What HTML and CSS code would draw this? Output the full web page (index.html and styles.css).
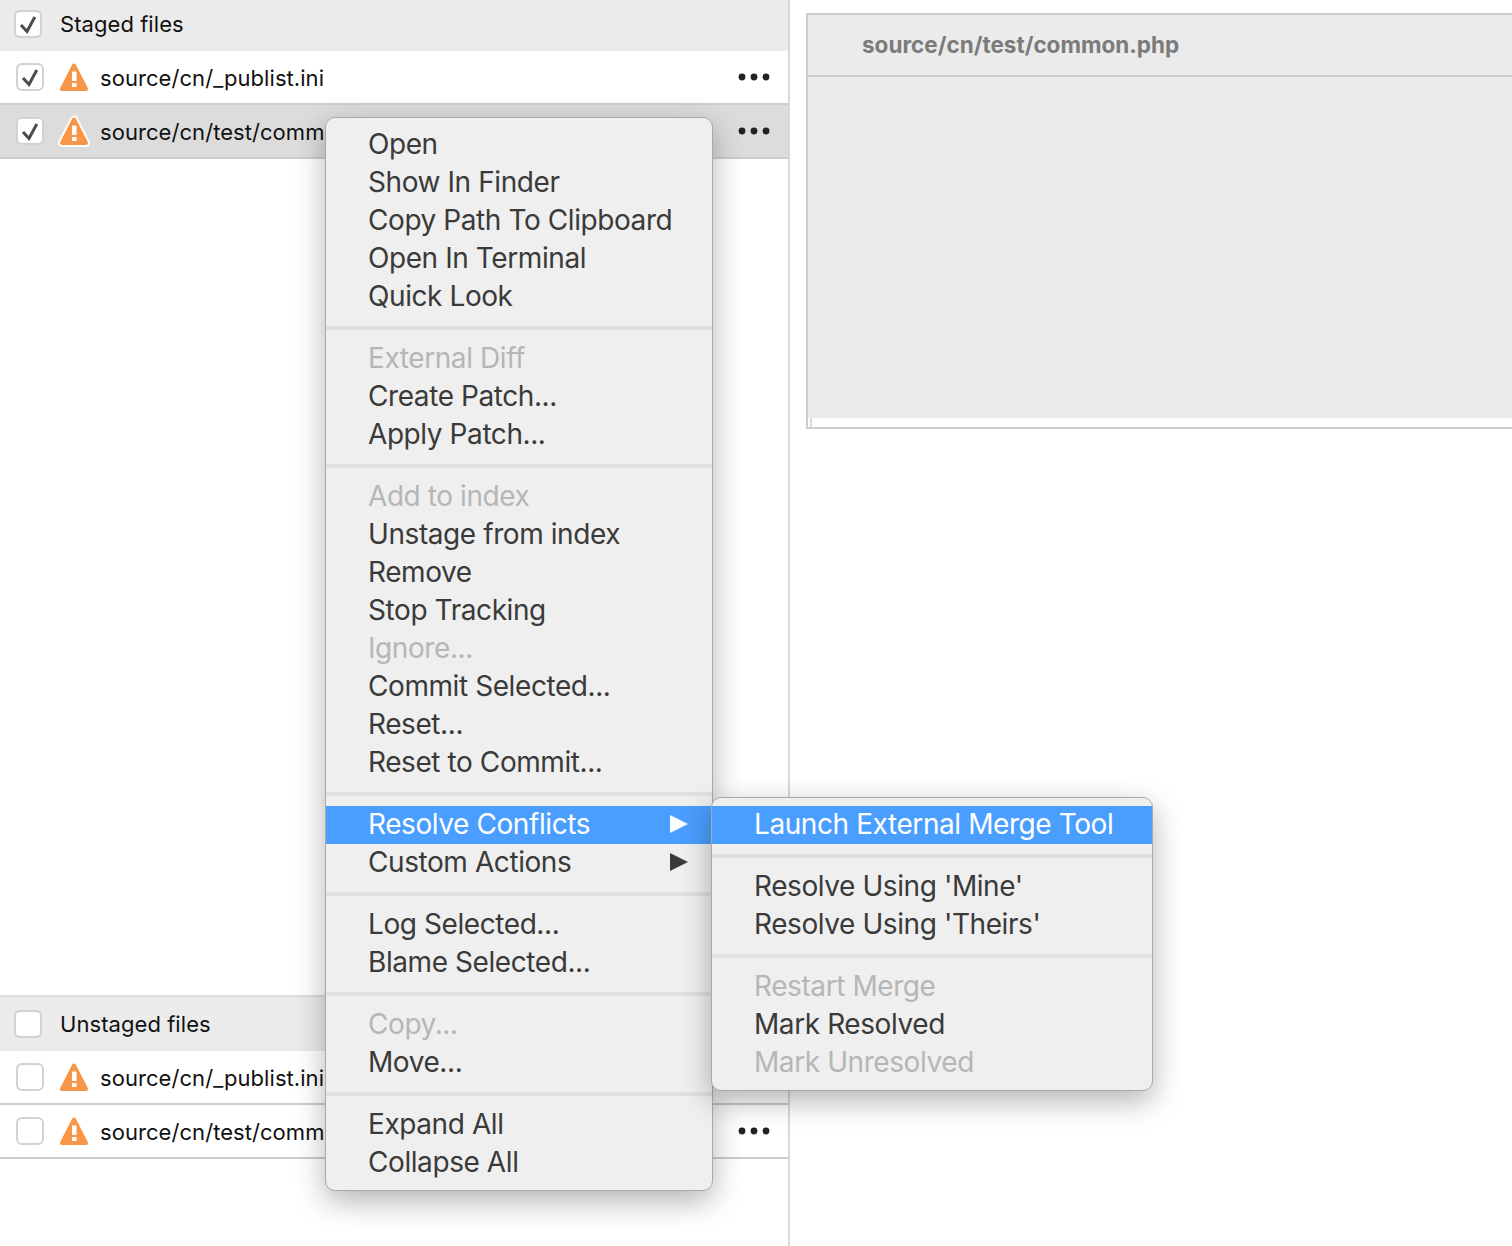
FILE: index.html
```html
<!DOCTYPE html>
<html lang="en">
<head>
  <meta charset="UTF-8">
  <title>Resolve Conflicts</title>
  <link rel="stylesheet" href="styles.css">
</head>
<body>

  <svg class="defs">
    <symbol id="tick" viewBox="0 0 28 28">
      <polyline points="7,15 13,21.5 20.8,7" fill="none" stroke="#4c4c4c" stroke-width="3"/>
    </symbol>
    <symbol id="warn" viewBox="0 0 28 28">
      <polygon points="14,2.5 2,26 26,26" fill="#f79646" stroke="#f79646" stroke-width="4" stroke-linejoin="round"/>
      <rect x="12" y="8.5" width="4.5" height="9.5" fill="#fff"/>
      <rect x="12" y="20" width="4.5" height="4" fill="#fff"/>
    </symbol>
    <symbol id="warnOutlined" viewBox="-3 -3 34 34">
      <polygon points="14,2.5 2,26 26,26" fill="#fff" stroke="#fff" stroke-width="8" stroke-linejoin="round"/>
      <polygon points="14,2.5 2,26 26,26" fill="#f79646" stroke="#f79646" stroke-width="4" stroke-linejoin="round"/>
      <rect x="12" y="8.5" width="4.5" height="9.5" fill="#fff"/>
      <rect x="12" y="20" width="4.5" height="4" fill="#fff"/>
    </symbol>
    <symbol id="dots" viewBox="0 0 32 8">
      <circle cx="4" cy="4" r="3.4"/>
      <circle cx="16" cy="4" r="3.4"/>
      <circle cx="28" cy="4" r="3.4"/>
    </symbol>
  </svg>

  <div class="window">
    <div class="filePane">
      <div class="section">
        <div class="sectionHead stagedHead">
          <span class="check"><svg><use href="#tick"/></svg></span>
          <span class="headLabel">Staged files</span>
        </div>
        <div class="fileRow">
          <span class="check"><svg><use href="#tick"/></svg></span>
          <svg class="warn"><use href="#warn"/></svg>
          <span class="fileName">source/cn/_publist.ini</span>
          <svg class="more"><use href="#dots"/></svg>
        </div>
        <div class="fileRow selected">
          <span class="check"><svg><use href="#tick"/></svg></span>
          <svg class="warn outlined"><use href="#warnOutlined"/></svg>
          <span class="fileName">source/cn/test/common.php</span>
          <svg class="more"><use href="#dots"/></svg>
        </div>
      </div>

      <div class="section">
        <div class="sectionHead unstagedHead">
          <span class="check"></span>
          <span class="headLabel">Unstaged files</span>
        </div>
        <div class="fileRow">
          <span class="check"></span>
          <svg class="warn"><use href="#warn"/></svg>
          <span class="fileName">source/cn/_publist.ini</span>
          <svg class="more"><use href="#dots"/></svg>
        </div>
        <div class="fileRow">
          <span class="check"></span>
          <svg class="warn"><use href="#warn"/></svg>
          <span class="fileName">source/cn/test/common.php</span>
          <svg class="more"><use href="#dots"/></svg>
        </div>
      </div>
    </div>

    <div class="diffPane">
      <div class="diffBox">
        <div class="diffHead">source/cn/test/common.php</div>
        <div class="diffBody"></div>
        <div class="diffFoot"></div>
      </div>
    </div>
  </div>

  <div class="menu mainMenu">
    <div class="item">Open</div>
    <div class="item">Show In Finder</div>
    <div class="item">Copy Path To Clipboard</div>
    <div class="item">Open In Terminal</div>
    <div class="item">Quick Look</div>
    <div class="sep"></div>
    <div class="item off">External Diff</div>
    <div class="item">Create Patch...</div>
    <div class="item">Apply Patch...</div>
    <div class="sep"></div>
    <div class="item off">Add to index</div>
    <div class="item">Unstage from index</div>
    <div class="item">Remove</div>
    <div class="item">Stop Tracking</div>
    <div class="item off">Ignore...</div>
    <div class="item">Commit Selected...</div>
    <div class="item">Reset...</div>
    <div class="item">Reset to Commit...</div>
    <div class="sep sepBefore"></div>
    <div class="item active hasSub">Resolve Conflicts<span class="arrow"></span></div>
    <div class="item hasSub">Custom Actions<span class="arrow"></span></div>
    <div class="sep sepAfter"></div>
    <div class="item">Log Selected...</div>
    <div class="item">Blame Selected...</div>
    <div class="sep"></div>
    <div class="item off">Copy...</div>
    <div class="item">Move...</div>
    <div class="sep"></div>
    <div class="item">Expand All</div>
    <div class="item">Collapse All</div>
  </div>

  <div class="menu subMenu">
    <div class="item active">Launch External Merge Tool</div>
    <div class="sep"></div>
    <div class="item">Resolve Using 'Mine'</div>
    <div class="item">Resolve Using 'Theirs'</div>
    <div class="sep"></div>
    <div class="item off">Restart Merge</div>
    <div class="item">Mark Resolved</div>
    <div class="item off">Mark Unresolved</div>
  </div>

</body>
</html>
```

FILE: styles.css
```css
html, body {
  margin: 0;
  height: 1246px;
  overflow: hidden;
  background: #fff;
  font-family: Inter, "Liberation Sans", sans-serif;
}
.defs {
  display: none;
}
.window {
  display: flex;
  height: 1246px;
}

/* left column */
.filePane {
  width: 788px;
  flex: none;
  border-right: 2px solid #d9d9d9;
  display: flex;
  flex-direction: column;
  justify-content: space-between;
  padding-bottom: 87px;
}
.sectionHead {
  display: flex;
  align-items: center;
  gap: 18px;
  padding-left: 14px;
  background: #ebebeb;
}
.stagedHead {
  height: 51px;
  padding-bottom: 3px;
  box-sizing: border-box;
}
.unstagedHead {
  height: 56px;
  box-sizing: border-box;
  border-top: 2px solid #dcdcdc;
}
.headLabel {
  font-size: 22px;
  letter-spacing: 0.06px;
  color: #111;
}
.fileRow {
  height: 52px;
  display: flex;
  align-items: center;
  padding: 0 18px 0 16px;
  border-bottom: 2px solid #cdcdcd;
  background: #fff;
}
.fileRow.selected {
  background: #dcdcdc;
}
.check {
  width: 28px;
  height: 28px;
  box-sizing: border-box;
  flex: none;
  border: 2px solid #d2d2d2;
  border-radius: 6px;
  background: #fff;
}
.check svg {
  display: block;
  width: 28px;
  height: 28px;
  margin: -2px;
}
.warn {
  width: 28px;
  height: 28px;
  margin-left: 16px;
  flex: none;
}
.warn.outlined {
  width: 34px;
  height: 34px;
  margin: 0 -3px 0 13px;
}
.fileName {
  margin-left: 12px;
  padding-top: 2px;
  font-size: 22px;
  letter-spacing: 0.06px;
  color: #111;
  flex: 1;
  white-space: nowrap;
}
.more {
  width: 32px;
  height: 8px;
  flex: none;
  fill: #222;
}

/* right column */
.diffPane {
  flex: 1;
  padding: 13px 0 0 16px;
  min-width: 0;
}
.diffBox {
  height: 412px;
  border: solid #cdcdcd;
  border-width: 2px 0 2px 2px;
  display: flex;
  flex-direction: column;
}
.diffHead {
  height: 60px;
  flex: none;
  padding-left: 54px;
  line-height: 60px;
  background: #ebebeb;
  border-bottom: 2px solid #cdcdcd;
  font-weight: 700;
  font-size: 22.5px;
  color: #7b7b7b;
}
.diffBody {
  flex: 1;
  background: #ebebeb;
}
.diffFoot {
  height: 9px;
  margin-left: 2px;
  border-left: 2px solid #d9d9d9;
}

/* context menus */
.menu {
  position: absolute;
  box-sizing: border-box;
  background: #efefef;
  border: 1px solid #a9a9a9;
  border-radius: 10px;
  box-shadow: 0 10px 30px rgba(0, 0, 0, 0.3);
  font-size: 28px;
  letter-spacing: -0.42px;
  color: #3a3a3a;
}
.mainMenu {
  left: 325px;
  top: 117px;
  width: 388px;
  height: 1074px;
  padding-top: 7px;
}
.subMenu {
  left: 711px;
  top: 797px;
  width: 442px;
  height: 294px;
  padding-top: 8px;
}
.item {
  height: 38px;
  line-height: 38px;
  padding-left: 42px;
  white-space: nowrap;
}
.subMenu .item, .item.hasSub {
  line-height: 36px;
}
.off {
  color: #b6b6b6;
}
.active {
  background: #4a9eff;
  color: #fff;
}
.hasSub {
  position: relative;
}
.arrow {
  position: absolute;
  left: 344px;
  top: 9px;
  border-left: 18px solid #3a3a3a;
  border-top: 9.5px solid transparent;
  border-bottom: 9.5px solid transparent;
}
.active .arrow {
  border-left-color: #fff;
}
.sep {
  height: 4px;
  margin: 10px 0;
  background: #e0e0e0;
}
.mainMenu .sep {
  margin: 11px 0 9px;
}
.mainMenu .sepBefore {
  margin-bottom: 10px;
}
.mainMenu .sepAfter {
  margin-top: 10px;
}
```
